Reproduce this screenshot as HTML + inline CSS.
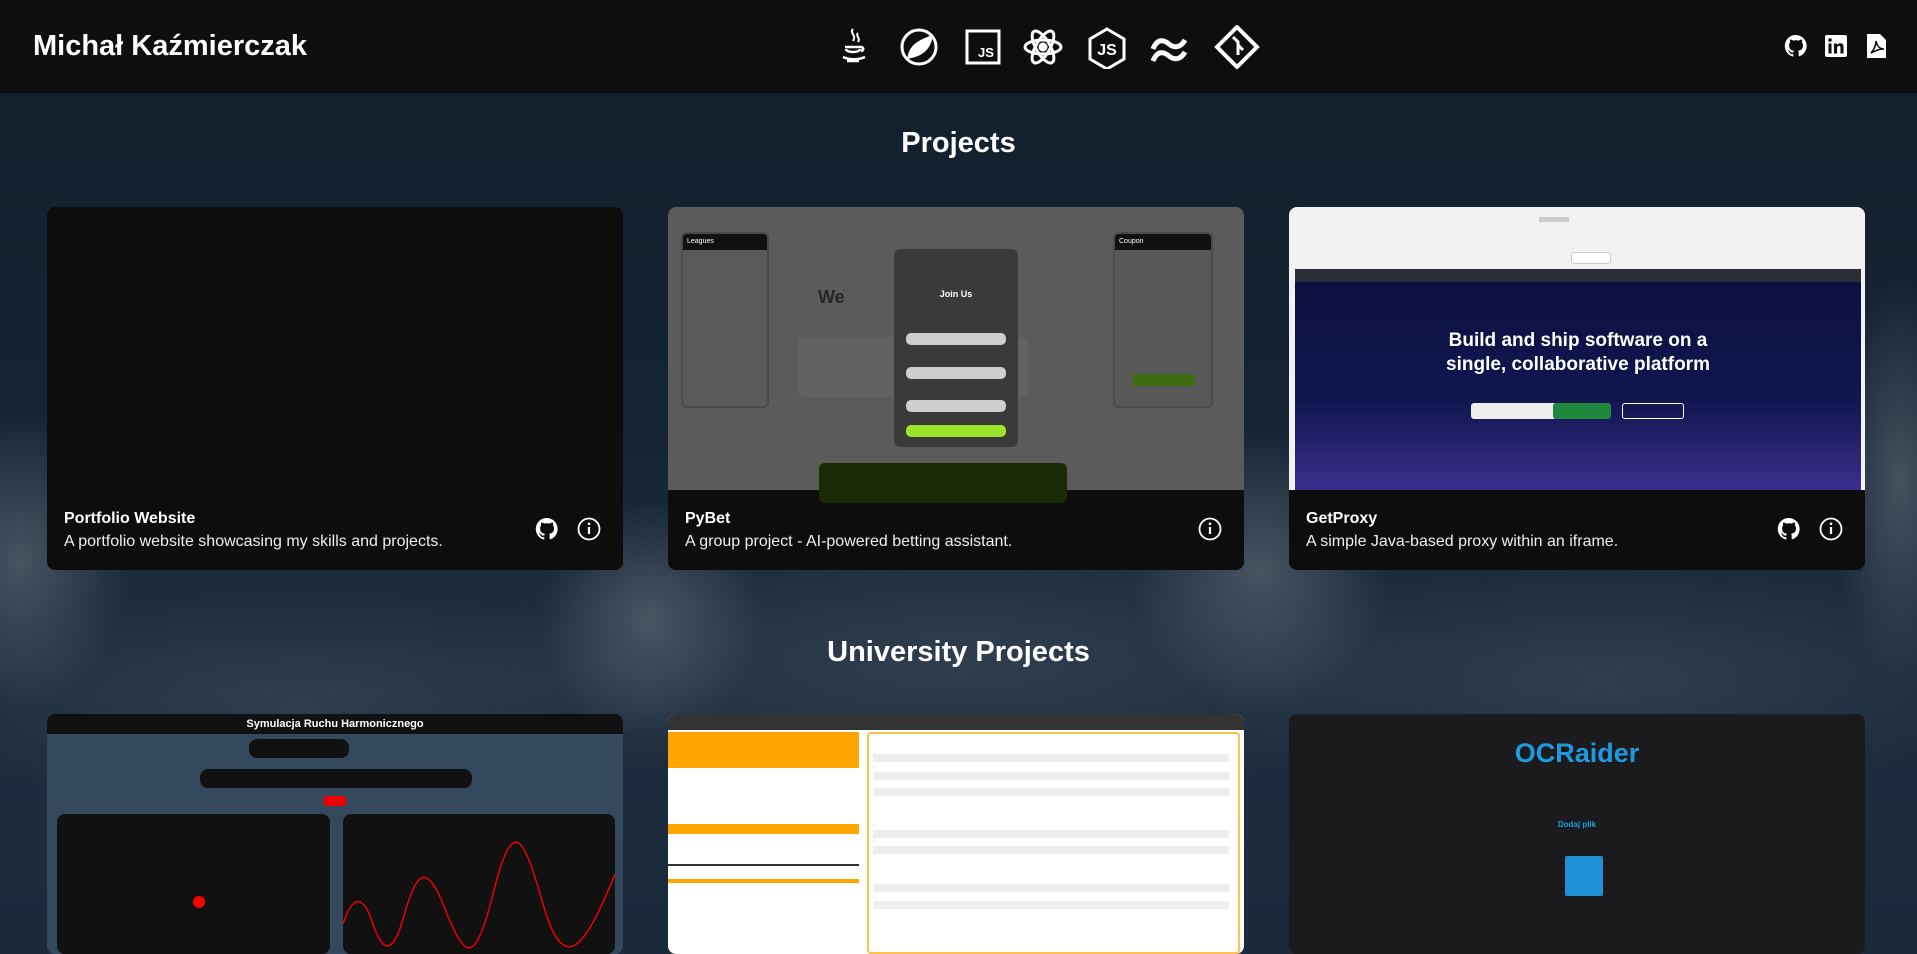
<!DOCTYPE html>
<html><head><meta charset="utf-8"><style>
*{margin:0;padding:0;box-sizing:border-box}
body{width:1917px;height:941px;overflow:hidden;position:relative;font-family:"Liberation Sans",sans-serif;background:#1a2a3b;color:#fff}
.abs{position:absolute}
header{position:absolute;left:0;top:0;width:1917px;height:93px;background:#0e0e0e;z-index:5}
.card{position:absolute;width:576px;background:#0d0d0d;border-radius:8px;overflow:hidden}
.ct{position:absolute;left:17px;font-weight:bold;font-size:16px}
.cd{position:absolute;left:17px;font-size:16px;color:#eee}
h2{position:absolute;width:1917px;text-align:center;font-size:29px;font-weight:bold}
</style></head><body>
<svg class="abs" style="left:0;top:0;display:block" width="1917" height="941">
<defs>
<linearGradient id="bg" x1="0" y1="0" x2="0" y2="1"><stop offset="0" stop-color="#121e2b"/><stop offset=".45" stop-color="#152434"/><stop offset=".7" stop-color="#1e2e40"/><stop offset="1" stop-color="#1a2a3b"/></linearGradient>
<radialGradient id="m1"><stop offset="0" stop-color="#7d858f" stop-opacity=".45"/><stop offset="1" stop-color="#7d858f" stop-opacity="0"/></radialGradient>
<radialGradient id="m2"><stop offset="0" stop-color="#4a5562" stop-opacity=".4"/><stop offset="1" stop-color="#4a5562" stop-opacity="0"/></radialGradient>
</defs>
<rect width="1917" height="941" fill="url(#bg)"/>
<ellipse cx="20" cy="560" rx="110" ry="150" fill="url(#m1)"/>
<ellipse cx="650" cy="620" rx="110" ry="120" fill="url(#m1)"/>
<ellipse cx="1260" cy="570" rx="130" ry="140" fill="url(#m1)"/>
<ellipse cx="1900" cy="480" rx="70" ry="200" fill="url(#m1)"/>
<ellipse cx="960" cy="660" rx="500" ry="140" fill="url(#m2)"/>
<ellipse cx="300" cy="700" rx="400" ry="110" fill="url(#m2)"/>
<ellipse cx="1600" cy="680" rx="400" ry="120" fill="url(#m2)"/>
</svg>
<header>
<div class="abs" style="left:33px;top:30px;font-size:29px;font-weight:bold">Michał Kaźmierczak</div>
<svg class="abs" style="left:837px;top:25px" width="430" height="44" fill="none" stroke="#fff" stroke-width="3">
<g transform="translate(0,0)"><path d="M16 4c-4 4 4 6 0 12M21 8c-3 3 3 5 0 9" stroke-width="2"/><path d="M8 22h16c3 0 3 4 0 4M9 24c0 4 14 4 14 0M6 32c6 3 16 3 22 0M10 36h12" stroke-width="2.5"/></g>
<g transform="translate(62,0)"><circle cx="20" cy="22" r="17"/><path d="M10 32c2-12 12-16 22-20-2 12-10 18-22 20z" fill="#fff"/></g>
<g transform="translate(128,4)"><rect x="2" y="2" width="32" height="32"/><text x="21" y="28" font-size="13" font-weight="bold" fill="#fff" stroke="none" text-anchor="middle" font-family="Liberation Sans">JS</text></g>
<g transform="translate(186,2)"><ellipse cx="20" cy="20" rx="18" ry="7"/><ellipse cx="20" cy="20" rx="18" ry="7" transform="rotate(60 20 20)"/><ellipse cx="20" cy="20" rx="18" ry="7" transform="rotate(-60 20 20)"/><circle cx="20" cy="20" r="3" fill="#fff"/></g>
<g transform="translate(250,2)"><path d="M20 2l17 10v20L20 42 3 32V12z"/><text x="20" y="28" font-size="16" font-weight="bold" fill="#fff" stroke="none" text-anchor="middle" font-family="Liberation Sans">JS</text></g>
<g transform="translate(312,6)"><path d="M4 18c4-10 10-10 16-5s12 3 16-4M4 30c4-10 10-10 16-5s12 3 16-4" stroke-width="5"/></g>
<g transform="translate(378,0)"><path d="M22 2l20 20-20 20L2 22z" stroke-width="4"/><path d="M18 12l5 5v13M23 20l5 5" stroke-width="3"/></g>
</svg>
<svg class="abs" style="left:1784px;top:34px" width="105" height="24" fill="#fff">
<path d="M12 1a11 11 0 0 0-3.5 21.5c.6.1.8-.2.8-.5v-2c-3 .7-3.7-1.4-3.7-1.4-.5-1.3-1.2-1.600-1.2-1.6-1-.7.1-.7.1-.7 1.1.1 1.7 1.1 1.7 1.1 1 1.7 2.6 1.2 3.2.9.1-.7.4-1.2.7-1.5-2.4-.3-5-1.2-5-5.4 0-1.2.4-2.2 1.1-3-.1-.3-.5-1.4.1-2.9 0 0 .9-.3 3 1.1a10 10 0 0 1 5.5 0c2.1-1.4 3-1.1 3-1.1.6 1.5.2 2.6.1 2.9.7.8 1.1 1.8 1.1 3 0 4.2-2.6 5.1-5 5.4.4.3.7 1 .7 2v3c0 .3.2.6.8.5A11 11 0 0 0 12 1z"/>
<g transform="translate(41,1)"><rect width="22" height="22" rx="2"/><rect x="3.5" y="8.5" width="3" height="10" fill="#0e0e0e"/><circle cx="5" cy="5" r="1.8" fill="#0e0e0e"/><path d="M9 8.5h3v1.5c.8-1.3 2-1.8 3.3-1.8 2.5 0 3.2 1.6 3.2 4v6.3h-3v-5.6c0-1.3-.3-2-1.4-2-1.3 0-2 .8-2 2.2v5.4H9z" fill="#0e0e0e"/></g>
<g transform="translate(83,0)"><path d="M0 0h13l6 6v18H0z"/><path d="M4 19c3-3 5-8 5-12 1 5 4 8 8 8-5 0-9 2-13 4z" fill="none" stroke="#0e0e0e" stroke-width="1.6"/></g>
</svg>
</header>
<h2 style="top:127px">Projects</h2>
<h2 style="top:636px">University Projects</h2>

<div class="card" style="left:47px;top:207px;height:363px">
<div class="ct" style="top:303px">Portfolio Website</div>
<div class="cd" style="top:326px">A portfolio website showcasing my skills and projects.</div>
<svg class="abs" style="left:488px;top:310px" width="100" height="24" fill="none" stroke="#fff" stroke-width="1.8"><path d="M12 1a11 11 0 0 0-3.5 21.5c.6.1.8-.2.8-.5v-2c-3 .7-3.7-1.4-3.7-1.4-.5-1.3-1.2-1.6-1.2-1.6-1-.7.1-.7.1-.7 1.1.1 1.7 1.1 1.7 1.1 1 1.7 2.6 1.2 3.2.9.1-.7.4-1.2.7-1.5-2.4-.3-5-1.2-5-5.4 0-1.2.4-2.2 1.1-3-.1-.3-.5-1.4.1-2.9 0 0 .9-.3 3 1.1a10 10 0 0 1 5.5 0c2.1-1.4 3-1.1 3-1.1.6 1.5.2 2.6.1 2.9.7.8 1.1 1.8 1.1 3 0 4.2-2.6 5.1-5 5.4.4.3.7 1 .7 2v3c0 .3.2.6.8.5A11 11 0 0 0 12 1z" fill="#fff" stroke="none"/><circle cx="54" cy="12" r="10.5"/><path d="M54 10v7" stroke-width="2.2"/><circle cx="54" cy="6.8" r="1.3" fill="#fff" stroke="none"/></svg>
</div>

<div class="card" style="left:668px;top:207px;height:363px">
<div class="abs" style="left:0;top:0;width:576px;height:283px;background:#5b5b5b">
<div class="abs" style="left:13px;top:25px;width:88px;height:176px;border:2px solid #4a4a4a;border-radius:6px;background:#595959"><div style="height:16px;background:#111;border-radius:4px 4px 0 0;font-size:7px;padding:4px">Leagues</div></div>
<div class="abs" style="left:445px;top:25px;width:100px;height:176px;border:2px solid #4a4a4a;border-radius:6px;background:#585858"><div style="height:16px;background:#111;border-radius:4px 4px 0 0;font-size:7px;padding:4px">Coupon</div><div style="position:absolute;left:18px;top:140px;width:62px;height:12px;background:#3f6b12"></div></div>
<div class="abs" style="left:150px;top:80px;width:100px;height:30px;color:#262626;font-weight:bold;font-size:18px">We</div>
<div class="abs" style="left:130px;top:130px;width:230px;height:60px;background:#626262;border-radius:6px"></div>
<div class="abs" style="left:151px;top:256px;width:248px;height:40px;background:#1b2a06;border-radius:6px"></div>
<div class="abs" style="left:226px;top:42px;width:124px;height:198px;background:#3a3a3a;border-radius:6px">
<div style="position:absolute;width:124px;top:40px;text-align:center;font-size:9px;font-weight:bold">Join Us</div>
<div style="position:absolute;left:12px;top:84px;width:100px;height:12px;background:#cfcfcf;border-radius:5px"></div>
<div style="position:absolute;left:12px;top:118px;width:100px;height:12px;background:#cfcfcf;border-radius:5px"></div>
<div style="position:absolute;left:12px;top:151px;width:100px;height:12px;background:#cfcfcf;border-radius:5px"></div>
<div style="position:absolute;left:12px;top:176px;width:100px;height:12px;background:#9ae42a;border-radius:5px"></div>
</div></div>
<div class="ct" style="top:303px">PyBet</div>
<div class="cd" style="top:326px">A group project - AI-powered betting assistant.</div>
<svg class="abs" style="left:530px;top:310px" width="24" height="24" fill="none" stroke="#fff" stroke-width="1.8"><circle cx="12" cy="12" r="10.5"/><path d="M12 10v7" stroke-width="2.2"/><circle cx="12" cy="6.8" r="1.3" fill="#fff" stroke="none"/></svg>
</div>

<div class="card" style="left:1289px;top:207px;height:363px">
<div class="abs" style="left:0;top:0;width:576px;height:283px;background:#f2f2f2">
<div class="abs" style="left:250px;top:10px;width:30px;height:5px;background:#ccc"></div>
<div class="abs" style="left:282px;top:45px;width:40px;height:12px;background:#fff;border:1px solid #ccc;border-radius:3px"></div>
<div class="abs" style="left:6px;top:62px;width:566px;height:221px;background:linear-gradient(180deg,#0b0f3e 0%,#111650 60%,#3b2f8e 100%)">
<div style="height:13px;background:#2a2d33"></div>
<div style="position:absolute;width:100%;top:60px;text-align:center;font-size:19px;font-weight:bold;line-height:24px">Build and ship software on a<br>single, collaborative platform</div>
<div style="position:absolute;left:176px;top:134px;width:86px;height:16px;background:#eee;border-radius:3px"></div>
<div style="position:absolute;left:258px;top:134px;width:58px;height:16px;background:#1f883d;border-radius:3px"></div>
<div style="position:absolute;left:327px;top:134px;width:62px;height:16px;border:1px solid #fff;border-radius:3px"></div>
</div></div>
<div class="ct" style="top:303px">GetProxy</div>
<div class="cd" style="top:326px">A simple Java-based proxy within an iframe.</div>
<svg class="abs" style="left:488px;top:310px" width="100" height="24" fill="none" stroke="#fff" stroke-width="1.8"><path d="M12 1a11 11 0 0 0-3.5 21.5c.6.1.8-.2.8-.5v-2c-3 .7-3.7-1.4-3.7-1.4-.5-1.3-1.2-1.6-1.2-1.6-1-.7.1-.7.1-.7 1.1.1 1.7 1.1 1.7 1.1 1 1.7 2.6 1.2 3.2.9.1-.7.4-1.2.7-1.5-2.4-.3-5-1.2-5-5.4 0-1.2.4-2.2 1.1-3-.1-.3-.5-1.4.1-2.9 0 0 .9-.3 3 1.1a10 10 0 0 1 5.5 0c2.1-1.4 3-1.1 3-1.1.6 1.5.2 2.6.1 2.9.7.8 1.1 1.8 1.1 3 0 4.2-2.6 5.1-5 5.4.4.3.7 1 .7 2v3c0 .3.2.6.8.5A11 11 0 0 0 12 1z" fill="#fff" stroke="none"/><circle cx="54" cy="12" r="10.5"/><path d="M54 10v7" stroke-width="2.2"/><circle cx="54" cy="6.8" r="1.3" fill="#fff" stroke="none"/></svg>
</div>

<div class="card" style="left:47px;top:714px;height:240px;background:#34495e">
<div style="height:20px;background:#111;text-align:center;font-size:11px;font-weight:bold;line-height:20px">Symulacja Ruchu Harmonicznego</div>
<div class="abs" style="left:202px;top:25px;width:100px;height:19px;background:#111;border-radius:8px"></div>
<div class="abs" style="left:153px;top:55px;width:272px;height:19px;background:#111;border-radius:8px"></div>
<div class="abs" style="left:276px;top:82px;width:24px;height:10px;background:#e00;border-radius:5px"></div>
<div class="abs" style="left:10px;top:100px;width:273px;height:140px;background:#111;border-radius:8px"><div style="position:absolute;left:136px;top:82px;width:12px;height:12px;border-radius:50%;background:#f00"></div></div>
<svg class="abs" style="left:296px;top:100px" width="272" height="140"><rect width="272" height="140" rx="8" fill="#111"/><path d="M0 110 C10 80 20 80 30 110 S50 140 60 105 S80 40 100 90 S130 160 150 80 S180 20 200 90 S240 140 272 60" fill="none" stroke="#e00" stroke-width="1.5"/></svg>
</div>

<div class="card" style="left:668px;top:714px;height:240px;background:#fff">
<div style="height:16px;background:#333"></div>
<div class="abs" style="left:0;top:18px;width:191px;height:36px;background:#ffa500"></div>
<div class="abs" style="left:0;top:42px;width:191px;height:12px;background:#ffa500"></div>
<div class="abs" style="left:0;top:110px;width:191px;height:10px;background:#ffa500"></div>
<div class="abs" style="left:0;top:150px;width:191px;height:2px;background:#333"></div>
<div class="abs" style="left:0;top:165px;width:191px;height:4px;background:#ffa500"></div>
<div class="abs" style="left:199px;top:18px;width:373px;height:222px;border:2px solid #ffc04d;border-radius:4px"></div>
<div class="abs" style="left:205px;top:40px;width:356px;height:8px;background:#eee"></div>
<div class="abs" style="left:205px;top:58px;width:356px;height:8px;background:#eee"></div>
<div class="abs" style="left:205px;top:74px;width:356px;height:8px;background:#eee"></div>
<div class="abs" style="left:205px;top:116px;width:356px;height:8px;background:#eee"></div>
<div class="abs" style="left:205px;top:132px;width:356px;height:8px;background:#eee"></div>
<div class="abs" style="left:205px;top:170px;width:356px;height:8px;background:#eee"></div>
<div class="abs" style="left:205px;top:187px;width:356px;height:8px;background:#eee"></div>
</div>

<div class="card" style="left:1289px;top:714px;height:240px;background:#1b1b1d">
<div class="abs" style="left:0;top:24px;width:576px;text-align:center;font-size:27px;font-weight:bold;color:#1e9be0">OCRaider</div>
<div class="abs" style="left:0;top:106px;width:576px;text-align:center;font-size:8px;font-weight:bold;color:#1e9be0">Dodaj plik</div>
<div class="abs" style="left:276px;top:142px;width:38px;height:40px;background:#1f8fd6;border-radius:2px"></div>
</div>
</body></html>
